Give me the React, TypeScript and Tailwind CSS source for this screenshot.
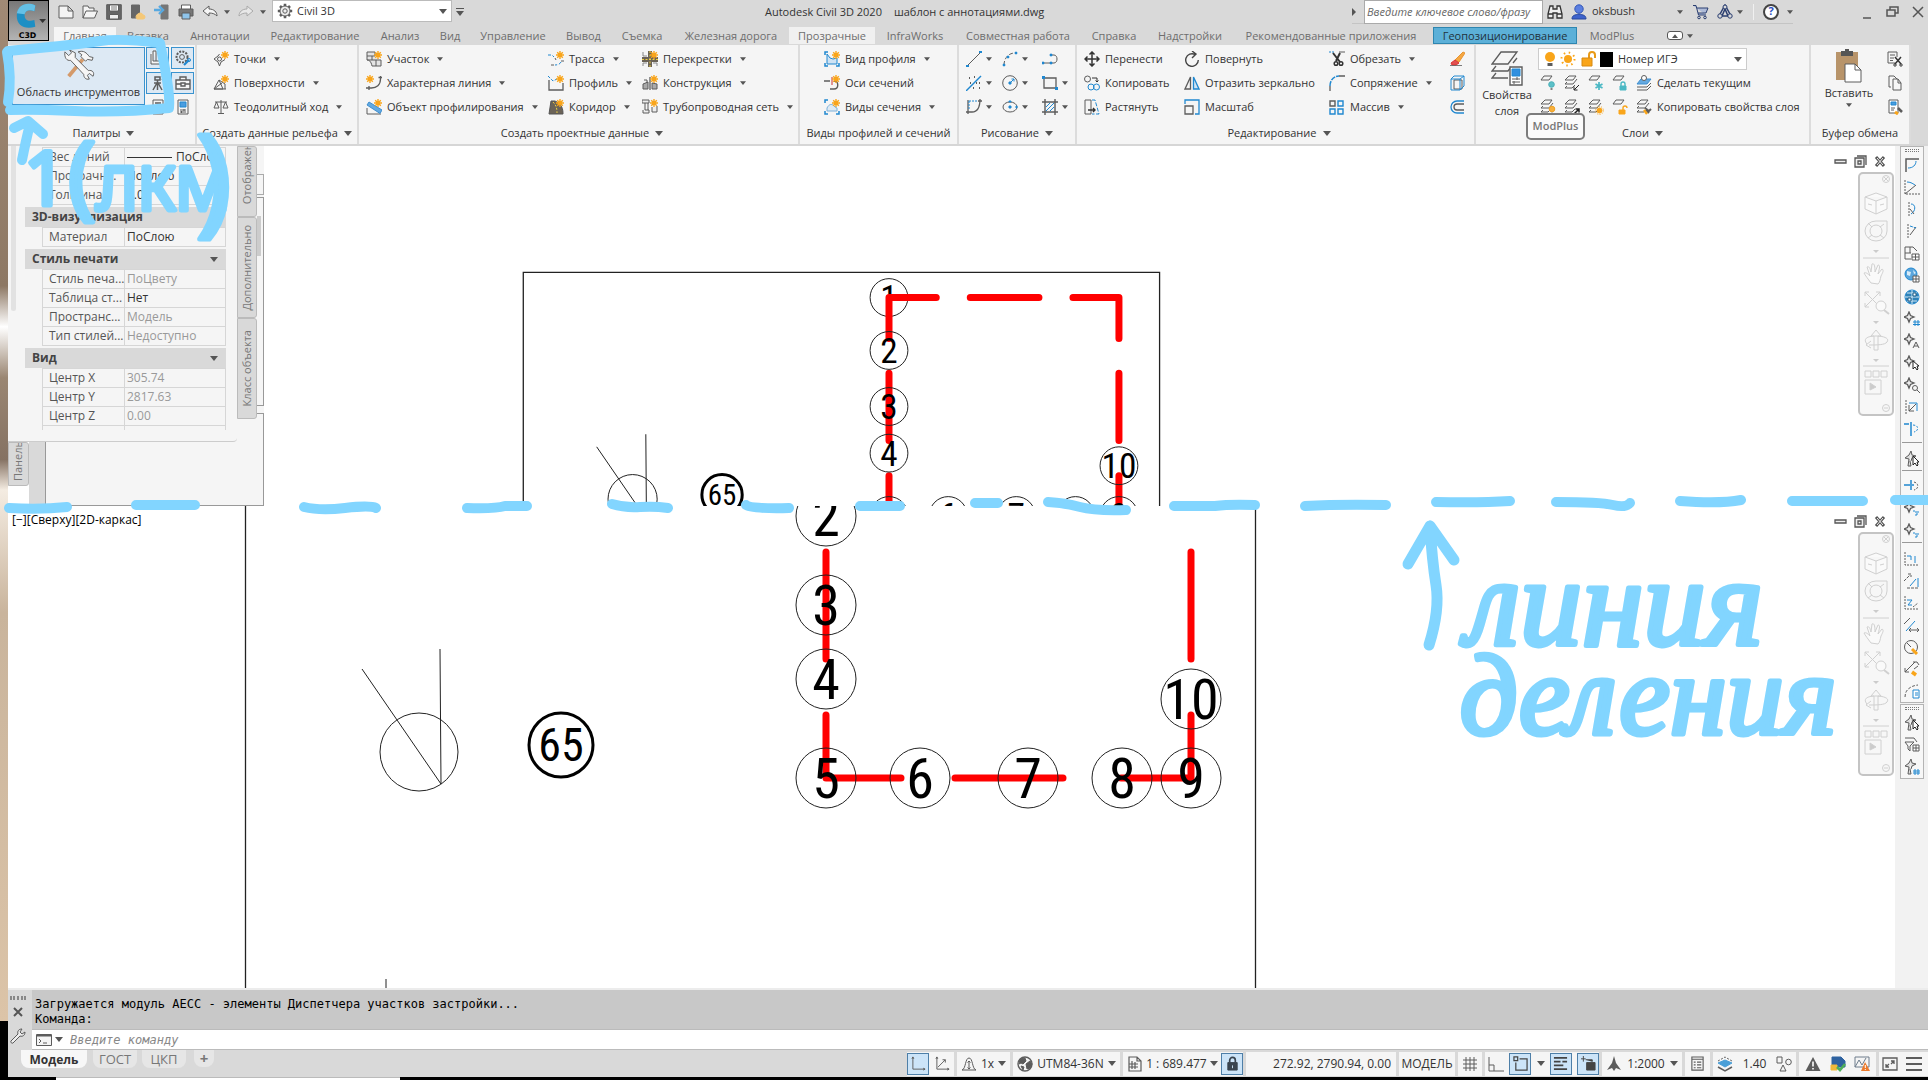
import type { ReactNode } from 'react';

const G = '#5c5c5c';
const B = '#2088d0';
const O = '#f9a51a';

const star = (
  <g stroke={O} strokeWidth="1.4">
    <path d="M12 0v8M8 4h8M9.2 1.2l5.6 5.6M14.8 1.2L9.2 6.8" />
    <circle cx="12" cy="4" r="2" fill={O} stroke="none" />
  </g>
);
const target = <path d="M5 1l1.500 3.500L10 6 6.500 7.500 5 11 3.500 7.500 0 6l3.500-1.500z" fill="#eee" strokeWidth="1.300" />;
const sheets = (
  <>
    <path d="M5 1h7l-3 4H1z" />
    <path d="M3 7L1 9h8l4-5M3 11l-2 2h7l3-3" />
  </>
);

const icons: Record<string, ReactNode> = {
  newFile: <path d="M1 2h9l5 5v7H1zM10 2v5h5" fill="#f4f4f4" />,
  open: <path d="M1 14V2h5l1 2h5v3M1 14l3-7h11.500l-3 7z" fill="#f4f4f4" />,
  save: (
    <>
      <path d="M.7.700h14.600v14.600H.7z" fill="#666" />
      <path d="M3.500 1h9v6h-9z" fill="#fff" />
      <path d="M3.500 10.500h9V15h-9z" fill="#eee" />
      <path d="M5 3h6M5 5h6" strokeWidth=".8" />
    </>
  ),
  openWeb: (
    <>
      <path d="M1.500 1h8v13h-8z" fill="#666" stroke="#666" />
      <path d="M7 15a3 3 0 0 1 1-5 3 3 0 0 1 5 1 2 2 0 0 1 0 4z" fill="#f5c877" stroke="#f5c877" />
    </>
  ),
  saveWeb: (
    <>
      <path d="M7 1h7v14H7z" fill="#777" stroke="#777" />
      <path d="M0 6h6M5 2l4 4-4 4" stroke="#58a9e0" strokeWidth="2.400" />
    </>
  ),
  print: (
    <>
      <path d="M3.500 5V1h9v4" fill="#fff" />
      <path d="M1 5h14v7H1z" fill="#777" />
      <path d="M4 9h8v6H4z" fill="#8fc4ea" />
    </>
  ),
  undo: <path d="M1 7l6-5v3c5 0 8 3 8 7-2-2-4-3-8-3v3z" fill="#f6f6f6" />,
  redo: <path d="M15 7L9 2v3c-5 0-8 3-8 7 2-2 4-3 8-3v3z" stroke="#aaa" fill="#e8e8e8" />,
  gear: (
    <>
      <path d="M8 .8v2.400M8 12.800v2.400M.8 8h2.400M12.800 8h2.400M3 3l1.600 1.600M11.400 11.400L13 13M13 3l-1.600 1.600M4.600 11.400L3 13" strokeWidth="2.600" />
      <circle cx="8" cy="8" r="5" fill="#eee" />
      <circle cx="8" cy="8" r="2.200" />
    </>
  ),
  binoculars: (
    <path
      d="M3 2h3v3h4V2h3l2 8v4h-5V9H6v5H1v-4zM1 10h5M10 10h5"
      fill="#eee"
      stroke="#333"
      strokeWidth="1.300"
    />
  ),
  user: (
    <>
      <circle cx="8" cy="5" r="4.200" fill="#5b7fe0" stroke="#3357b8" />
      <path d="M1 15c0-4 3-4 7-5 4 1 7 1 7 5z" fill="#3d62cc" stroke="#27479c" />
    </>
  ),
  cart: (
    <>
      <path d="M0 1.500h3L5.500 11H13M4 4h11l-2 5H5" stroke="#2a3e70" fill="#aebbd8" />
      <circle cx="6" cy="13.500" r="1.300" stroke="#2a3e70" />
      <circle cx="12" cy="13.500" r="1.300" stroke="#2a3e70" />
    </>
  ),
  appStore: (
    <g stroke="#2a3e70">
      <path d="M8 1L2 12h12zM8 5l-3 7h6z" strokeWidth="1.500" />
      <circle cx="8" cy="3" r="2" fill="#d9d9d9" />
      <circle cx="3" cy="12" r="2.200" fill="#d9d9d9" />
      <circle cx="13" cy="12" r="2.200" fill="#d9d9d9" />
    </g>
  ),
  book: <path d="M3 1v10h8v3H1V4M3 1h3v10M9 2l2-1 4 1v2" fill="#f6f6f6" />,
  survey: <path d="M5 2h5v3H5zM12 1l2 2-2 2M7.500 5v3M7.500 7L3 15M7.500 7L12 15M7.500 8v7M4 8h7" strokeWidth="1.500" />,
  gearWrench: (
    <>
      <circle cx="7" cy="7" r="5.500" strokeDasharray="2 1.200" strokeWidth="2" />
      <circle cx="7" cy="7" r="2.400" />
      <path d="M9 15l5-5" stroke={B} strokeWidth="2.200" />
      <circle cx="14" cy="10" r="1.500" stroke={B} />
    </>
  ),
  toolbox: <path d="M1 5h14v9H1zM5 5V2h6v3M1 9h5M10 9h5M6 8h4v3H6z" fill="#f6f6f6" strokeWidth="1.400" />,
  calculator: (
    <>
      <path d="M3 1h10v14H3z" />
      <path d="M5 4h6M5 8h2M9 8h2M5 11h2M9 11h2" strokeWidth="1.500" />
    </>
  ),
  props: (
    <>
      <path d="M3 1h10v14H3z" fill="#f6f6f6" />
      <path d="M5 3h6v5H5z" fill="#4a9de0" stroke={B} />
      <path d="M5 11h6M5 13h6M9 10v2M6.500 12v2" />
    </>
  ),
  points: (
    <>
      <path d="M6.500 3L5 5 1 8l4 3 1.500 4L8 11l4-2.500" fill="none" />
      <circle cx="6.500" cy="8" r="2" />
      {star}
    </>
  ),
  surface: (
    <>
      <path d="M1 14L6 5l4 9zM6 5l6 4v5M1 14h12M1 14l8-6" />
      {star}
    </>
  ),
  scales: <path d="M8 1v13M5 14.500h6M2 3h12M3.500 3L1 9h5zM12.500 3L10 9h5z" />,
  parcel: (
    <>
      <path d="M1 1h8v4H1zM1 5v4c2 0 4 1 5 6h9V9M6 5v4h9M10 9v6M1 9h5" fill="#e4e4e4" />
      {star}
    </>
  ),
  featureLine: (
    <>
      <path d="M14.500 1v3c0 6-4 9-9 9H0M12.500 2.500h4M3 11v4" strokeWidth="1.300" />
      <g transform="translate(-8 0)">{star}</g>
    </>
  ),
  grading: (
    <>
      <path d="M1 9v6h14" />
      <path d="M1 6l2-3 13 8-2 3.500z" fill="#64a9e0" stroke="#3e8fd0" />
      {star}
    </>
  ),
  alignment: (
    <>
      <path d="M0 4h3M4.500 4.500L6 6M13 11c-1 2-3 3-6 3" stroke={B} strokeDasharray="3 2" />
      <path d="M7 7l1 2M13 10h3M3 14h3" />
      {star}
    </>
  ),
  profile: (
    <>
      <path d="M1 5v10h14V8" strokeWidth="1.300" />
      <path d="M0 1l5 5 4-2" stroke={B} strokeDasharray="3 1.500" />
      {star}
    </>
  ),
  corridor: (
    <>
      <path d="M1 15L3 2h4c7 3 8 8 8 13z" fill="#6b6357" stroke="#555" />
      <path d="M5 3c3 3 4 6 4 11" stroke="#f0d040" strokeDasharray="2 1.500" />
      {star}
    </>
  ),
  intersection: (
    <>
      <path d="M6 0h4v16H6zM0 6h16v5H0z" fill="#6b6357" stroke="none" />
      <path d="M8 0v16M0 8.500h16" stroke="#f0d040" strokeDasharray="2 1.500" />
      <path d="M1 1v4h4M15 15v-3h-4M1 15v-3h4" stroke="#888" />
      {star}
    </>
  ),
  assembly: (
    <>
      <path d="M8 2v13" strokeWidth="1.300" />
      <path d="M1 9l5-2v7H1zM10 8l5 1v5h-5z" fill="#aaa" />
      <path d="M2 5h3v3" />
      {star}
    </>
  ),
  pipes: (
    <>
      <path d="M0 1h7v3H0zM3 4v7h4v3H1v-3M10 8v5h5V7M6 4v7" fill="#eee" />
      {star}
    </>
  ),
  profileView: (
    <>
      <path d="M4 1H1v3M12 15h3v-3M4 15H1v-3" stroke={B} strokeWidth="1.500" />
      <path d="M3 3v10h10V7L9 8 6 7z" stroke={B} fill="#cfe3f4" />
      {star}
    </>
  ),
  sampleLines: (
    <>
      <path d="M0 6h6M10 6c5 0 5 8 0 8H6" strokeWidth="1.400" />
      <path d="M8 2v8" stroke="#c33" />
      {star}
    </>
  ),
  sectionView: (
    <>
      <path d="M4 1H1v3M12 15h3v-3M4 15H1v-3" stroke={B} strokeWidth="1.500" />
      <path d="M3 12V9c2-4 5-5 8-1l2 1v3z" stroke="#7ab0da" fill="#dfeaf4" />
      {star}
    </>
  ),
  line: (
    <>
      <path d="M2 14L14 2" />
      <path d="M0 14h3v2H0zM13 0h3v2h-3z" fill={B} stroke="none" />
    </>
  ),
  arc: (
    <>
      <path d="M2 14C2 8 6 2 13 2" strokeDasharray="4 2" />
      <path d="M1 13h2v2H1zM5 5h2v2H5zM13 1h2v2h-2z" fill={B} stroke={B} strokeWidth=".5" />
    </>
  ),
  polyline: (
    <>
      <path d="M1 12h7M9 4h3c4 0 4 8 0 8h-2" />
      <path d="M0 11h2v2H0zM8 11h2v2H8zM8 3h2v2H8z" fill={B} stroke={B} strokeWidth=".6" />
    </>
  ),
  points2: (
    <>
      <path d="M0 16L15 1" stroke={B} strokeWidth="1.400" />
      <path d="M3 3h1M8 2h1M4 8h1M7 13h1M10 8h1M13 13h1M13 8h1" strokeWidth="2" />
    </>
  ),
  circle: (
    <>
      <circle cx="8" cy="8" r="7.300" />
      <path d="M8 8l4-4M9.500 4H12v2.500" stroke={B} />
      <path d="M7 7h2v2H7z" fill={B} stroke={B} />
    </>
  ),
  rectangle: (
    <>
      <path d="M2 3h12v10H2z" strokeWidth="1.300" />
      <path d="M0 1h3v3H0zM13 12h3v3h-3z" fill={B} stroke="none" />
    </>
  ),
  curve: (
    <>
      <path d="M2 1v14M0 13h6c6 0 8-5 8-13M12 2h4" strokeWidth="1.300" />
      <path d="M3 2h8M3 2v9" stroke={B} strokeDasharray="2 1" />
    </>
  ),
  ellipse: (
    <>
      <ellipse cx="8" cy="8" rx="7" ry="5" />
      <path d="M7 7h2v2H7zM14 7h1v2h-1zM7 2h2v1H7z" fill={B} stroke={B} />
    </>
  ),
  hatch: (
    <>
      <path d="M3 0v16M13 0v16M0 3h16M0 13h16" strokeWidth="1.400" />
      <path d="M4 8l4-4M4 12l8-8M8 12l4-4" stroke={B} />
    </>
  ),
  move: <path d="M8 1v14M1 8h14M5.500 3.500L8 1l2.500 2.500M5.500 12.500L8 15l2.500-2.500M3.500 5.500L1 8l2.500 2.500M12.500 5.500L15 8l-2.500 2.500" stroke="#333" strokeWidth="1.500" />,
  copy: (
    <>
      <circle cx="3.500" cy="4" r="3" />
      <path d="M8 3h5v4M11.500 5.500L13 7l1.500-1.500" stroke="#333" />
      <circle cx="7" cy="12" r="3" stroke={B} />
      <circle cx="12.500" cy="12" r="3" stroke={B} />
    </>
  ),
  stretch: (
    <>
      <path d="M1 1h6v14H1z" />
      <path d="M8 1h3l4 14H8" stroke={B} strokeDasharray="4 1.500" />
      <path d="M4 11h7M9 9l2 2-2 2" stroke="#333" strokeWidth="1.400" />
    </>
  ),
  rotate: <path d="M11 3.500A6.300 6.300 0 1 0 14.300 9M8 0l4 3-4 4" stroke="#444" strokeWidth="1.400" />,
  mirror: (
    <>
      <path d="M6.500 2v12H1z" strokeWidth="1.300" />
      <path d="M9.500 2v12H15z" stroke={B} strokeWidth="1.300" fill="#cfe3f4" />
    </>
  ),
  scale: (
    <>
      <path d="M1 5V1h14v14h-4" stroke={B} strokeWidth="1.300" />
      <path d="M1 15V7h8v8z" strokeWidth="1.300" />
    </>
  ),
  trim: (
    <>
      <path d="M0 1h5" stroke={B} strokeDasharray="2 1" />
      <path d="M10 1h6" />
      <path d="M4 2l7 9M11 2L7 10" stroke="#333" strokeWidth="2" />
      <circle cx="7" cy="12.500" r="1.800" stroke="#333" strokeWidth="1.500" />
      <circle cx="12" cy="12.500" r="1.800" stroke="#333" strokeWidth="1.500" />
    </>
  ),
  fillet: (
    <>
      <path d="M1 16v-5M10 1h6" strokeWidth="1.300" />
      <path d="M1 11C1 5 5 1 10 1" stroke={B} strokeWidth="1.500" strokeDasharray="5 1" />
    </>
  ),
  array: (
    <>
      <path d="M1 2h5v5H1z" strokeWidth="1.400" />
      <path d="M9 2h5v5H9zM1 10h5v5H1zM9 10h5v5H9z" stroke={B} strokeWidth="1.400" />
    </>
  ),
  erase: (
    <>
      <path d="M6 9l8-8 2 1-6 9z" fill="#f5a742" stroke="#e79430" />
      <path d="M2 12l4-3 4 3-3 2H3z" fill="#e05050" stroke="#d33" />
      <path d="M1 14.500h12" strokeWidth=".8" />
    </>
  ),
  explode: (
    <>
      <path d="M5 5h8v9H5z" stroke={G} />
      <path d="M2 4h9v11H2zM2 4l3-3h10v10l-4 4M11 4l4-3" stroke={B} />
    </>
  ),
  offset: (
    <>
      <path d="M15 2H8a6 6 0 0 0 0 12h7" stroke={B} strokeWidth="1.300" />
      <path d="M15 5H8a3 3 0 0 0 0 6h7" strokeWidth="1.300" />
    </>
  ),
  layOff: (
    <>
      <path d="M4 1h8L9 5H1z" />
      <circle cx="11.500" cy="9.500" r="2.800" fill="#5cc0c8" stroke="#4ab0b8" />
      <path d="M10.500 14h2" strokeWidth="1.500" />
    </>
  ),
  layIso: (
    <>
      {sheets}
      <path d="M15 10l-5 5M10 11.500V15h3.500" stroke="#222" />
    </>
  ),
  layFreeze: (
    <>
      <path d="M4 1h8L9 5H1z" />
      <path d="M11 7v8M7.500 9l7 4M7.500 13l7-4" stroke="#4ab8c4" strokeWidth="1.700" />
    </>
  ),
  layLock: (
    <>
      <path d="M4 1h8L9 5H1z" />
      <path d="M9 11v-2a2 2 0 0 1 4 0v2" stroke="#4ab8c4" strokeWidth="1.400" />
      <path d="M8 11h6v4H8z" fill="#4ab8c4" stroke="#4ab8c4" />
    </>
  ),
  layCurrent: (
    <>
      <path d="M1 9l4-5h10l-4 5z" fill="#64a9e0" stroke="#3e8fd0" />
      <circle cx="8" cy="3" r="2.500" fill="#fff" />
      <path d="M1 12h10l4-4M1 15h10l4-4" />
    </>
  ),
  layOn: (
    <>
      {sheets}
      <circle cx="12" cy="10" r="2.800" fill="#f7b03c" stroke="#f0a020" />
      <path d="M11 14.500h2" strokeWidth="1.500" />
    </>
  ),
  layUniso: (
    <>
      {sheets}
      <path d="M10 15l5-5M11.500 10H15v3.500" stroke="#222" strokeWidth="1.500" />
    </>
  ),
  layThaw: (
    <>
      {sheets}
      <circle cx="11.500" cy="11.500" r="2.500" fill={O} stroke={O} />
      <circle cx="11.500" cy="11.500" r="4" stroke={O} strokeDasharray="1 1.500" />
    </>
  ),
  layUnlock: (
    <>
      <path d="M4 1h8L9 5H1z" />
      <path d="M11 11V9a2 2 0 0 1 4 0" stroke={O} strokeWidth="1.400" />
      <path d="M7 11h6v4H7z" fill={O} stroke={O} />
    </>
  ),
  layMatch: (
    <>
      {sheets}
      <path d="M9 9l4 3 2-2M10 11l3 3" stroke={G} strokeWidth="2" />
      <path d="M8 11l3 4" stroke={O} strokeWidth="2.400" />
    </>
  ),
  cut: (
    <>
      <path d="M8 12H1V1h9v5M3 4h5M3 7h4M3 9.500h3" />
      <path d="M8 6l6 7M14 6l-6 7" stroke="#333" strokeWidth="1.500" />
      <circle cx="8" cy="14" r="1.200" stroke="#333" />
      <circle cx="14" cy="14" r="1.200" stroke="#333" />
    </>
  ),
  copyClip: <path d="M4 12H2V1h5l3 3M6 4h5l3 4v7H6zM11 4v4h3" fill="#f6f6f6" />,
  matchProps: (
    <>
      <path d="M2 1h9v13H2z" fill="#fff" />
      <path d="M4 3h5v3H4z" fill="#4a9de0" stroke={B} />
      <path d="M4 9h4M4 11h3" />
      <path d="M8 13l3 2" stroke={O} strokeWidth="3" />
      <path d="M11 9l4 4" strokeWidth="2.500" />
    </>
  ),
  // transparent-command toolbar
  t1: (
    <>
      <path d="M2 15V2h13" strokeWidth="1.500" />
      <path d="M4 11c5 0 8-3 8-7" stroke={B} />
    </>
  ),
  t2: (
    <>
      <path d="M1 1v14h15" strokeDasharray="2 1" />
      <path d="M1 15L12 6" />
      <path d="M3 3c3 0 5 1 8 3" stroke={B} />
    </>
  ),
  t3: (
    <>
      <path d="M5 1v14" strokeDasharray="2 1" />
      <path d="M7 3c5 0 5 7 0 10" stroke={B} />
      <path d="M6 8l4 5" />
    </>
  ),
  t4: (
    <>
      <path d="M4 1v14" strokeDasharray="2 1" />
      <path d="M6 12l6-8" />
      <path d="M6 3l6 2" stroke={B} strokeDasharray="3 1" />
    </>
  ),
  t5: (
    <>
      <path d="M1 2h8l4 4M1 2v12h6M1 8h6M6 2v6" />
      <path d="M8 9h7v6H8zM8 12h7M11.500 9v6" fill="#fff" />
    </>
  ),
  t6: (
    <>
      <circle cx="7" cy="7" r="6" fill="#5aa5dc" stroke={B} />
      <path d="M3 4l4 1-1 4-3-1zM9 3l3 3-2 1z" fill="#d8ecf8" stroke="none" />
      <path d="M9 9h6v6H9zM9 12h6M12 9v6" fill="#fff" />
    </>
  ),
  t7: (
    <>
      <circle cx="8" cy="8" r="7" fill="#2f82b8" stroke={B} />
      <path d="M1 8h14M8 1v14M3 4h10M3 12h10" stroke="#cfe6f5" />
      <path d="M4 9h3v3H4zM9 4h3v3H9z" fill="#fff" stroke="#1a5a86" />
    </>
  ),
  tNum: (
    <>
      {target}
      <path d="M11 9v6M14 9v6M9 11h7M9 13.500h7" stroke={B} />
    </>
  ),
  tName: (
    <>
      {target}
      <path d="M9 15l3-6 3 6M10 13h4" />
    </>
  ),
  tPick: (
    <>
      {target}
      <path d="M9 6v8l2-2 2 3 1-1-1-3h2z" fill="#fff" stroke="#222" />
    </>
  ),
  tZoom: (
    <>
      {target}
      <circle cx="11" cy="11" r="2.500" />
      <path d="M13 13l3 3" />
    </>
  ),
  t8: (
    <>
      <path d="M2 1v14" strokeDasharray="2 1" />
      <path d="M5 4h8v8" stroke={B} />
      <path d="M5 6v6h5M5 12l7-7" />
    </>
  ),
  t9: (
    <>
      <path d="M0 3h5M7 1v14" stroke={B} strokeWidth="1.500" />
      <path d="M9 4c6 0 6 6 1 7" stroke={B} strokeDasharray="2 1.500" />
    </>
  ),
  t10: (
    <>
      <path d="M7 1v4M7 7v4M0 6h4M4 6h6" stroke={B} strokeWidth="1.500" />
      <path d="M10 3c5 1 5 7 0 8" strokeDasharray="2 1.500" />
    </>
  ),
  t11: (
    <>
      {target}
      <path d="M9 10h3v5M14 10v3h-2" stroke={B} strokeDasharray="2 1" />
    </>
  ),
  t12: (
    <>
      <path d="M1 1v13h14" strokeDasharray="2 1" />
      <path d="M3 5h4v4M11 5v7" stroke={B} />
    </>
  ),
  t13: (
    <>
      <path d="M0 8l6-6M4 1h3v3M3 15h12" strokeDasharray="3 1" />
      <path d="M6 13l6-7M14 5v9" stroke={B} />
    </>
  ),
  t14: (
    <>
      <path d="M1 1v13h14M9 12l5-4" strokeDasharray="2 1" />
      <path d="M3 5h5l-4 5h4" stroke={B} />
    </>
  ),
  t15: (
    <>
      <path d="M0 7l6-6M5 13h10M7 11l-2 2 2 2M13 11l2 2-2 2" />
      <path d="M2 14L11 4" stroke={B} />
    </>
  ),
  t16: (
    <>
      <circle cx="7" cy="8" r="6.500" />
      <path d="M3 4l4 4" />
      <path d="M8 10l5 5" stroke={O} strokeWidth="3" />
    </>
  ),
  t17: (
    <>
      <path d="M1 11L11 1M1 7v4h4M9 1h4l2 3M10 8l4-3" />
      <path d="M8 11l4 3" stroke={O} strokeWidth="3.500" />
    </>
  ),
  t18: (
    <>
      <path d="M1 14C1 8 5 3 14 2" strokeDasharray="3 1.500" />
      <path d="M9 7h6v8H9zM11 10h3M11 12h3" stroke={B} fill="#fff" />
    </>
  ),
  tPick2: (
    <>
      <path d="M7 0l1 4 4 1-4 2-1 3M7 0L5 4 1 7l4 1-1 7h3l-1-5" fill="#ddd" />
      <path d="M9 5v9l2-2 2 3 1-1-1-3h2z" fill="#fff" stroke="#222" />
    </>
  ),
  tSheet2: (
    <>
      <path d="M1 1h9l3 4M1 5h9l-4 4v5l-2-2V9z" />
      <path d="M9 8h6v6H9zM9 11h6M12 8v6" fill="#fff" />
    </>
  ),
  tNum2: (
    <>
      <path d="M7 0l1 4 4 1-4 2-1 3M7 0L5 4 1 7l4 1-1 7h3l-1-5" fill="#ddd" />
      <path d="M11 10v6M14 10v6M9 12h7M9 14h7" stroke={B} />
    </>
  ),
  // status bar
  ucs: <path d="M2 1v13h13M1 3l1-2 1 2M13 13l2 1-2 1" />,
  ucs2: <path d="M2 1v13h13M1 3l1-2 1 2M13 13l2 1-2 1M3 12l8-8M8 4h3v3" />,
  exag: <path d="M1 14C5 13 4 2 8 2s3 11 7 12zM8 5v8M6.500 6.500L8 5l1.500 1.500M6.500 11.500L8 13l1.500-1.500" />,
  globe: (
    <>
      <circle cx="8" cy="8" r="7" strokeWidth="1.400" />
      <path d="M3 3l5-1 1 3-3 3-2-1-2 1zM9 8l4-3 2 3-2 4-3 1zM4 10l3 1-1 3z" fill={G} />
    </>
  ),
  scaleSheet: <path d="M2 1h8l4 4v10H2zM10 1v4h4M2 8h9M2 11h9M5 5v8M8 6v7" strokeWidth="1.200" />,
  lock: (
    <>
      <path d="M5 7V4.500a3 3 0 0 1 6 0V7" stroke="#3a4550" strokeWidth="1.800" />
      <path d="M3 7h10v8H3z" fill="#3a4550" stroke="#3a4550" />
      <path d="M8 10v3" stroke="#cce4f8" />
    </>
  ),
  grid: <path d="M4 1v14M8 1v14M12 1v14M1 4h14M1 8h14M1 12h14" />,
  ortho: <path d="M1 1v14h15M1 9h5v6" />,
  osnap: <path d="M1 1h4v4H1zM7 3h8v12H3V7" strokeWidth="1.300" stroke="#444" />,
  weight: <path d="M1 2h14M1 6h7M10 6h5M1 10h10M1 14h14" strokeWidth="2" stroke="#444" />,
  cycle: (
    <>
      <path d="M0 3h5M2.500 0v6" stroke="#444" />
      <path d="M5 4h7v2M6 7h9v8H6z" fill="#444" stroke="#444" />
    </>
  ),
  annot: <path d="M8 0l2 7 5 7-5-2-2 3-2-3-5 2 5-7z" fill={G} stroke="none" />,
  list: <path d="M2 1h12v14H2zM2 3.500h12M4 6.500h2M7.500 6.500H12M4 9.500h2M7.500 9.500H12M4 12.500h2M7.500 12.500H12" strokeWidth="1.200" />,
  stack: (
    <>
      <path d="M1 5l7-4 7 4" strokeDasharray="2 1.500" />
      <path d="M1 7l7-3 7 3-7 4z" fill="#4a9fd8" stroke="#4a9fd8" />
      <path d="M1 11l7 4 7-4" strokeWidth="1.500" />
    </>
  ),
  shapes: (
    <>
      <path d="M1 1h5v6H1zM7 9l3 6H4z" />
      <circle cx="12.500" cy="6" r="2.800" />
    </>
  ),
  warn: (
    <>
      <path d="M8 1l7.500 14H.5z" fill={G} stroke="none" />
      <path d="M8 5.500v5M8 12v1.600" stroke="#fff" strokeWidth="1.600" />
    </>
  ),
  dbCheck: (
    <>
      <path d="M2 1h9l4 4v6H2z" fill="#2f62a0" stroke="#2f62a0" />
      <path d="M1 9h6v5H1z" fill="#f0b93a" stroke="#f0b93a" />
      <path d="M7 11l3 3 5-6" stroke="#4fae5a" strokeWidth="2.600" />
    </>
  ),
  graph: (
    <>
      <path d="M1 1h14v10H1zM1 11l4-7 3 5 4-7" stroke="#6e7d8c" />
      <path d="M11 6l5 9H7z" fill="#ec7a2c" stroke="none" />
      <path d="M11.300 9v3M11.300 13v1" stroke="#fff" />
    </>
  ),
  expand: <path d="M1 2h14v12H1zM9 5h3v3M12 5L9 8M4 8v3h3M4 11l3-3" strokeWidth="1.300" />,
  burger: <path d="M0 2h16M0 8h16M0 14h16" strokeWidth="2" />,
};

function Icon({ name, className = 'size-4' }: { name: string; className?: string }) {
  return (
    <svg viewBox="0 0 16 16" className={`shrink-0 ${className}`} fill="none" stroke={G} aria-hidden="true">
      {icons[name]}
    </svg>
  );
}

function Caret({ big = false }: { big?: boolean }) {
  return (
    <svg viewBox="0 0 8 5" className={`shrink-0 ${big ? 'h-[5px] w-2' : 'h-1 w-[6px]'}`} aria-hidden="true">
      <path d="M0 0h8L4 5z" fill="#555" />
    </svg>
  );
}

function Tool({ icon, label, menu }: { icon: string; label: string; menu?: boolean }) {
  return (
    <button className="flex h-6 items-center gap-[5px] whitespace-nowrap hover:bg-[#dde9f4]">
      <Icon name={icon} />
      <span>{label}</span>
      {menu && (
        <span className="pl-[3px]">
          <Caret />
        </span>
      )}
    </button>
  );
}

function Panel({ title, menu, className, children }: { title: string; menu?: boolean; className: string; children: ReactNode }) {
  return (
    <section className={`flex shrink-0 flex-col border-r-2 border-[#dcdcdc] bg-[#f5f5f5] pt-[2px] ${className}`}>
      <div className="flex h-[76px]">{children}</div>
      <button className="flex h-5 items-center justify-center gap-[6px] whitespace-nowrap">
        {title}
        {menu && <Caret big />}
      </button>
    </section>
  );
}

const tabs = [
  { label: 'Главная', cls: 'w-[62px] bg-[#f5f5f5]' },
  { label: 'Вставка', cls: 'w-[64px]' },
  { label: 'Аннотации', cls: 'w-[80px]' },
  { label: 'Редактирование', cls: 'w-[110px]' },
  { label: 'Анализ', cls: 'w-[60px]' },
  { label: 'Вид', cls: 'w-[40px]' },
  { label: 'Управление', cls: 'w-[86px]' },
  { label: 'Вывод', cls: 'w-[55px]' },
  { label: 'Съемка', cls: 'w-[62px]' },
  { label: 'Железная дорога', cls: 'w-[116px]' },
  { label: 'Прозрачные', cls: 'w-[86px] bg-[#f0f0f0]' },
  { label: 'InfraWorks', cls: 'w-[80px]' },
  { label: 'Совместная работа', cls: 'w-[126px]' },
  { label: 'Справка', cls: 'w-[66px]' },
  { label: 'Надстройки', cls: 'w-[86px]' },
  { label: 'Рекомендованные приложения', cls: 'w-[196px]' },
  { label: 'Геопозиционирование', cls: 'ml-1 w-[144px] border border-[#2e86b0] bg-[#5cb0d8] text-[#22323c]' },
  { label: 'ModPlus', cls: 'w-[70px]' },
];

function TitleBar() {
  return (
    <header className="flex h-[45px] bg-[#d9d9d9] text-[11px]">
      <button className="flex h-[41px] w-[41px] shrink-0 flex-col items-center border border-black bg-linear-to-b from-[#777] to-[#b4b4b4]">
        <svg viewBox="0 0 40 39" className="h-full w-full" aria-label="Civil 3D">
          <path d="M27 4C17 0 8 5 8 15s8 14 19 11l-1-7c-6 2-10 0-10-5s5-6 10-4z" fill="#1d8fc4" />
          <path d="M27 4C17 0 10 4 8 12l8 1c1-4 5-5 10-3z" fill="#64c0e6" />
          <path d="M31 18h7l-3.500 4z" fill="#333" />
          <text x="19" y="37" textAnchor="middle" fontSize="8" fontWeight="700" className="font-['DejaVu_Sans']">
            C3D
          </text>
        </svg>
      </button>
      <div className="min-w-0 flex-1">
        <div className="flex h-[27px] items-start">
          <div className="flex h-[23px] items-center pl-[9px]">
            <div className="flex gap-2">
              {['newFile', 'open', 'save', 'openWeb', 'saveWeb', 'print', 'undo'].map((n) => (
                <button key={n} aria-label={n}>
                  <Icon name={n} />
                </button>
              ))}
            </div>
            <div className="flex w-9 items-center justify-between pl-[6px]">
              <Caret />
              <Icon name="redo" />
            </div>
            <div className="flex w-[18px] justify-center">
              <Caret />
            </div>
          </div>
          <label className="relative flex h-[22px] w-[180px] items-center gap-1 border border-[#bbb] bg-white px-1">
            <Icon name="gear" />
            <select aria-label="Рабочее пространство" className="flex-1 appearance-none bg-transparent outline-none">
              <option>Civil 3D</option>
            </select>
            <Caret big />
          </label>
          <button aria-label="Настройка" className="flex h-[23px] w-4 flex-col items-center justify-center gap-[2px]">
            <span className="h-px w-2 bg-[#555]" />
            <Caret big />
          </button>
          <h1 className="ml-[297px] flex h-6 items-center gap-[12px] whitespace-nowrap">
            <span>Autodesk Civil 3D 2020</span>
            <span>шаблон с аннотациями.dwg</span>
          </h1>
          <div className="ml-auto flex h-6 items-center border-b border-[#c4c4c4]">
            <svg viewBox="0 0 4 8" className="mr-2 h-2 w-1" aria-hidden="true">
              <path d="M0 0v8l4-4z" fill="#555" />
            </svg>
            <input
              aria-label="Поиск"
              placeholder="Введите ключевое слово/фразу"
              className="h-6 w-[179px] border border-[#aaa] bg-white px-[2px] italic outline-none placeholder:text-[#666]"
            />
            <button aria-label="Найти" className="ml-1">
              <Icon name="binoculars" />
            </button>
            <button className="ml-2 flex w-[112px] items-center gap-[5px]">
              <Icon name="user" />
              <span>oksbush</span>
              <span className="ml-auto">
                <Caret />
              </span>
            </button>
            <button aria-label="Корзина" className="ml-[10px]">
              <Icon name="cart" />
            </button>
            <button aria-label="Приложения" className="ml-2 flex items-center gap-1">
              <Icon name="appStore" />
              <Caret />
            </button>
            <button aria-label="Помощь" className="ml-[10px] flex items-center gap-2 border-l border-[#f0f0f0] pl-[9px]">
              <span className="flex size-4 items-center justify-center rounded-full border-2 border-[#444] bg-white font-bold text-[#2a4ec0]">?</span>
              <Caret />
            </button>
          </div>
          <div className="ml-[66px] flex h-6 items-center pr-[3px]">
            <svg viewBox="0 0 66 16" className="h-4 w-[66px]" fill="none" stroke="#555" strokeWidth="1.500" aria-label="Окно">
              <path d="M4 14h8M28 6h8v6h-8zM31 6V3h8v6h-3M54 3l10 10M64 3L54 13" />
            </svg>
          </div>
        </div>
        <nav className="flex h-[17px] items-center pl-[5px] text-[#6e6e6e]">
          {tabs.map((t) => (
            <button key={t.label} className={`h-[17px] shrink-0 text-center leading-[15px] whitespace-nowrap ${t.cls}`}>
              {t.label}
            </button>
          ))}
          <button aria-label="Свернуть ленту" className="ml-5 flex items-center gap-1">
            <span className="flex h-[9px] w-4 items-center justify-center rounded-[3px] border border-[#555] bg-white">
              <span className="rotate-180">
                <Caret />
              </span>
            </span>
            <Caret />
          </button>
        </nav>
      </div>
    </header>
  );
}

function SmallToggle({ icon, on }: { icon: string; on?: boolean }) {
  return (
    <button
      aria-label={icon}
      className={`flex h-[22px] w-[23px] items-center justify-center border ${on ? 'border-[#3a93cf] bg-[#dde9f4]' : 'border-transparent'}`}
    >
      <Icon name={icon} />
    </button>
  );
}

function Ribbon() {
  return (
    <div className="relative flex h-[101px] border-b-2 border-[#d6d6d6] bg-[#d9d9d9] text-[11px]">
      <Panel title="Палитры" menu className="w-[189px] pl-1">
        <button className="flex h-[58px] w-[133px] shrink-0 flex-col items-center border border-[#3a93cf] bg-[#dde9f4] pt-[2px]">
          <svg viewBox="0 0 32 32" className="size-8" fill="none" aria-hidden="true">
            <path d="M5 28L20 10" stroke="#d49a6a" strokeWidth="4" />
            <path d="M15 2c6-2 9 1 12 5l4 1-1 3-5-1-2 2-5-5 1-2z" fill="#f6f6f6" stroke={G} />
            <path d="M1 2l4 4 3-3-2-3 6 3v5l14 14c4-1 7 2 5 6l-4-3-2 2 2 4c-4 1-6-2-6-5L7 11c-4 1-7-3-6-9z" fill="#f6f6f6" stroke={G} />
          </svg>
          <span className="leading-6 whitespace-nowrap">Область инструментов</span>
        </button>
        <div className="ml-px grid h-[72px] shrink-0 grid-cols-2 gap-x-[2px] gap-y-[2px]">
          <SmallToggle icon="book" on />
          <SmallToggle icon="gearWrench" on />
          <SmallToggle icon="survey" on />
          <SmallToggle icon="toolbox" on />
          <SmallToggle icon="calculator" />
          <SmallToggle icon="props" />
        </div>
      </Panel>
      <Panel title="Создать данные рельефа" menu className="w-[162px]">
        <div className="pl-4">
          <Tool icon="points" label="Точки" menu />
          <Tool icon="surface" label="Поверхности" menu />
          <Tool icon="scales" label="Теодолитный ход" menu />
        </div>
      </Panel>
      <Panel title="Создать проектные данные" menu className="w-[441px] pl-[7px]">
        <div className="w-[182px] shrink-0">
          <Tool icon="parcel" label="Участок" menu />
          <Tool icon="featureLine" label="Характерная линия" menu />
          <Tool icon="grading" label="Объект профилирования" menu />
        </div>
        <div className="w-[94px] shrink-0">
          <Tool icon="alignment" label="Трасса" menu />
          <Tool icon="profile" label="Профиль" menu />
          <Tool icon="corridor" label="Коридор" menu />
        </div>
        <div>
          <Tool icon="intersection" label="Перекрестки" menu />
          <Tool icon="assembly" label="Конструкция" menu />
          <Tool icon="pipes" label="Трубопроводная сеть" menu />
        </div>
      </Panel>
      <Panel title="Виды профилей и сечений" className="w-[159px]">
        <div className="pl-6">
          <Tool icon="profileView" label="Вид профиля" menu />
          <Tool icon="sampleLines" label="Оси сечений" />
          <Tool icon="sectionView" label="Виды сечения" menu />
        </div>
      </Panel>
      <Panel title="Рисование" menu className="w-[118px]">
        <div className="grid grid-cols-[36px_40px_28px] content-start pl-[7px]">
          {['line', 'arc', 'polyline', 'points2', 'circle', 'rectangle', 'curve', 'ellipse', 'hatch'].map((n) => (
            <button key={n} aria-label={n} className="flex h-6 items-center gap-1">
              <Icon name={n} />
              {n !== 'polyline' && <Caret />}
            </button>
          ))}
        </div>
      </Panel>
      <Panel title="Редактирование" menu className="w-[399px] pl-[7px]">
        <div className="w-[100px] shrink-0">
          <Tool icon="move" label="Перенести" />
          <Tool icon="copy" label="Копировать" />
          <Tool icon="stretch" label="Растянуть" />
        </div>
        <div className="w-[145px] shrink-0">
          <Tool icon="rotate" label="Повернуть" />
          <Tool icon="mirror" label="Отразить зеркально" />
          <Tool icon="scale" label="Масштаб" />
        </div>
        <div className="w-[120px] shrink-0">
          <Tool icon="trim" label="Обрезать" menu />
          <Tool icon="fillet" label="Сопряжение" menu />
          <Tool icon="array" label="Массив" menu />
        </div>
        <div>
          {['erase', 'explode', 'offset'].map((n) => (
            <button key={n} aria-label={n} className="flex h-6 items-center">
              <Icon name={n} />
            </button>
          ))}
        </div>
      </Panel>
      <Panel title="Слои" menu className="w-[335px]">
        <button className="flex w-[62px] shrink-0 flex-col items-center pt-1 leading-4">
          <svg viewBox="0 0 32 36" className="h-9 w-8 shrink-0" fill="none" stroke={G} aria-hidden="true">
            <path d="M10 1h16L17 13H1zM5 15l-4 5h16l3-4M5 22l-4 5h16M26 7l-4 5" strokeWidth="1.300" />
            <path d="M19 16h12v18H19z" fill="#fff" strokeWidth="1.400" />
            <path d="M21 18h8v7h-8z" fill="#3090e0" stroke={B} />
            <path d="M21 28h8M21 31h8M26 26v3M23 30v3" />
          </svg>
          <span className="w-14">Свойства слоя</span>
        </button>
        <div>
          <div className="flex h-6 items-center">
            <label className="flex h-[22px] w-[209px] items-center gap-[5px] border border-[#ccc] bg-white px-1">
              <svg viewBox="0 0 70 16" className="h-4 w-[70px]" fill="none" aria-hidden="true">
                <circle cx="7" cy="6" r="5" fill={O} />
                <path d="M4.500 13.500h5" stroke={G} strokeWidth="3" />
                <circle cx="25" cy="8" r="4" fill={O} />
                <circle cx="25" cy="8" r="6.500" stroke={O} strokeWidth="2" strokeDasharray="1.500 3.600" />
                <path d="M46 7V4a3 3 0 0 1 6 0v3" stroke="#e89a18" strokeWidth="2" />
                <path d="M39 7h10v8H39z" fill={O} stroke="#d88a10" />
                <path d="M57 1h13v15H57z" fill="#000" />
              </svg>
              <select aria-label="Слой" className="flex-1 appearance-none bg-transparent outline-none">
                <option>Номер ИГЭ</option>
              </select>
              <Caret big />
            </label>
          </div>
          <div className="flex h-6 items-center gap-2 pl-[2px]">
            {['layOff', 'layIso', 'layFreeze', 'layLock'].map((n) => (
              <Icon key={n} name={n} />
            ))}
            <Tool icon="layCurrent" label="Сделать текущим" />
          </div>
          <div className="flex h-6 items-center gap-2 pl-[2px]">
            {['layOn', 'layUniso', 'layThaw', 'layUnlock'].map((n) => (
              <Icon key={n} name={n} />
            ))}
            <Tool icon="layMatch" label="Копировать свойства слоя" />
          </div>
        </div>
      </Panel>
      <Panel title="Буфер обмена" className="w-[100px] border-r-0">
        <button className="flex w-[76px] shrink-0 flex-col items-center pt-[2px]">
          <svg viewBox="0 0 28 34" className="h-[34px] w-7" fill="none" aria-hidden="true">
            <path d="M1 3h22v28H1z" fill="#b8946a" />
            <path d="M6 2h12v5H6zM10 0h4v3h-4z" fill="#555" />
            <path d="M10 15h10l6 6v12H10z" fill="#fff" stroke={G} />
            <path d="M20 15v6h6" stroke={G} />
          </svg>
          <span className="leading-5">Вставить</span>
          <Caret />
        </button>
        <div>
          {['cut', 'copyClip', 'matchProps'].map((n) => (
            <button key={n} aria-label={n} className="flex h-6 items-center">
              <Icon name={n} />
            </button>
          ))}
        </div>
      </Panel>
      <div role="tooltip" className="absolute top-[68px] left-[1518px] flex h-[27px] w-[59px] items-center justify-center rounded-[5px] border-2 border-[#7c7c7c] bg-[#fbfbfb] text-[11px] font-semibold text-[#777]">
        ModPlus
      </div>
    </div>
  );
}

type Row = { name: string; value: string; on?: boolean; line?: boolean };

function PropGroup({ title, rows }: { title?: string; rows: Row[] }) {
  return (
    <div className="mb-[2px]">
      {title && (
        <div className="flex h-5 items-center justify-between bg-[#d9d9d9] pr-[8px] pl-[7px] font-bold text-[#444]">
          {title}
          <Caret big />
        </div>
      )}
      <table className="ml-[17px] w-[184px] table-fixed border-collapse">
        <tbody>
          {rows.map((r) => (
            <tr key={r.name} className="h-[19px]">
              <th scope="row" className="w-[82px] border border-[#d6d6d6] pl-[6px] text-left leading-[18px] font-normal whitespace-nowrap text-[#555]">
                {r.name}
              </th>
              <td className={`border border-[#d6d6d6] pl-[2px] leading-[18px] whitespace-nowrap ${r.on ? 'text-[#333]' : 'text-[#999]'}`}>
                {r.line && <span className="mr-1 inline-block h-px w-[45px] bg-[#333] align-middle" />}
                {r.value}
              </td>
            </tr>
          ))}
        </tbody>
      </table>
    </div>
  );
}

function SideTab({ label, className }: { label: string; className: string }) {
  return (
    <button className={`flex w-5 justify-center overflow-hidden rounded-r-[3px] border border-[#bbb] bg-[#d9d9d9] text-[11px] text-[#777] ${className}`}>
      <span className="shrink-0 rotate-180 whitespace-nowrap [writing-mode:vertical-rl]">{label}</span>
    </button>
  );
}

function Palette() {
  return (
    <aside className="flex w-64 shrink-0 flex-col overflow-hidden bg-white">
      <div className="flex h-[296px] shrink-0 bg-[#f5f5f5]">
        <div className="flex w-[229px] overflow-hidden rounded-br border-b border-[#ccc] pl-[3px]">
          <div className="h-[165px] w-[5px] rounded-b bg-[#e2e2e2]" />
          <div className="ml-[9px] h-[284px] w-[201px] overflow-hidden pt-px">
            <PropGroup
              rows={[
                { name: 'Вес линий', value: 'ПоСлою', on: true, line: true },
                { name: 'Прозрачн...', value: 'ПоСлою', on: true },
                { name: 'Толщина', value: '0.00', on: true },
              ]}
            />
            <PropGroup title="3D-визуализация" rows={[{ name: 'Материал', value: 'ПоСлою', on: true }]} />
            <PropGroup
              title="Стиль печати"
              rows={[
                { name: 'Стиль печа...', value: 'ПоЦвету' },
                { name: 'Таблица ст...', value: 'Нет', on: true },
                { name: 'Пространс...', value: 'Модель' },
                { name: 'Тип стилей...', value: 'Недоступно' },
              ]}
            />
            <PropGroup
              title="Вид"
              rows={[
                { name: 'Центр X', value: '305.74' },
                { name: 'Центр Y', value: '2817.63' },
                { name: 'Центр Z', value: '0.00' },
                { name: ' ', value: ' ' },
              ]}
            />
          </div>
        </div>
        <div className="w-5">
          <SideTab label="Отображение" className="h-[71px] items-end pb-3" />
          <SideTab label="Дополнительно" className="h-[101px] items-center" />
          <SideTab label="Класс объекта" className="h-[101px] items-center" />
        </div>
        <div className="flex flex-1 flex-col">
          <div className="mt-[28px] h-[21px] border border-l-0 border-[#aaa]" />
          <div className="mt-[2px] h-[209px] border-y border-r border-[#999]">
            <div className="mt-[18px] h-10 w-1 bg-[#ccc]" />
          </div>
          <div className="mt-[7px] flex-1 border-t border-r border-[#999]" />
        </div>
      </div>
      <div className="flex flex-1">
        <div className="w-[21px] bg-white">
          <SideTab label="Панель" className="h-11 w-[21px] items-end pb-1" />
        </div>
        <div className="w-4 bg-[#d9d9d9]" />
        <div className="flex-1 border-x border-b border-[#999] bg-[#f5f5f5]" />
      </div>
    </aside>
  );
}

function NavBar() {
  return (
    <svg viewBox="0 0 37 244" className="h-[244px] w-[37px]" fill="none" stroke="#d0d0d0" aria-label="Панель навигации">
      <rect x="1" y="1" width="34" height="242" rx="4" fill="#f7f7f7" stroke="#c4c4c4" strokeWidth="2" />
      <circle cx="28" cy="7" r="3.500" />
      <path d="M26 5l4 4M30 5l-4 4" />
      <path d="M18 21l11 4v12l-11 5-11-5V25zM7 25l11 4 11-4M18 29v13M10 32l4 1M22 33l4-1" fill="#fafafa" />
      <path d="M18 49h11v10a11 10 0 1 1-11-10z" />
      <circle cx="18" cy="59" r="6" />
      <path d="M14 55l-4-4M22 55l4-3M14 63l-4 3M22 63l4 3" />
      <path d="M15 78h6l-3 3z" fill="#ccc" stroke="none" />
      <path d="M5 86h26" />
      <path d="M13 111c-3-4-6-8-7-10 2-1 4 1 6 3l-3-9c2-1 3 1 4 5l1-8c2-1 3 1 3 8l3-7c2 0 2 2 0 9l4-5c2 1 1 3-1 7-1 4-1 6-3 8z" fill="#fafafa" />
      <path d="M7 120l15 15M22 120L7 135M7 124v-4h4M18 120h4v4M7 131v4h4" />
      <circle cx="23" cy="134" r="5" fill="#fafafa" />
      <path d="M26 138l5 4" strokeWidth="2" />
      <path d="M15 149h6l-3 3z" fill="#ccc" stroke="none" />
      <path d="M16 178v-14h-3l5-6 5 6h-3v14zM9 172c-5-6 2-8 9-8s14 2 11 6c-2 3-10 3-18 3M13 169l-5 4 5 3" />
      <path d="M15 187h6l-3 3z" fill="#ccc" stroke="none" />
      <path d="M5 194h26" />
      <path d="M7 199h6v6H7zM15 199h6v6h-6zM23 199h6v6h-6zM7 208h16v14H7z" />
      <path d="M12 211v7l6-3z" fill="#ccc" />
      <circle cx="28" cy="236" r="3.500" />
      <path d="M26 236h4" />
    </svg>
  );
}

const marks = [
  { n: '2', x: 826, y: 515 },
  { n: '3', x: 826, y: 604 },
  { n: '4', x: 826, y: 678 },
  { n: '5', x: 826, y: 777 },
  { n: '6', x: 920, y: 777 },
  { n: '7', x: 1028, y: 777 },
  { n: '8', x: 1122, y: 777 },
  { n: '9', x: 1191, y: 777 },
  { n: '10', x: 1191, y: 698 },
];

// Same model geometry in both viewports, only the view transform differs.
function Plan({ view }: { view: string }) {
  return (
    <svg className="absolute inset-0 h-full w-full" fill="none" aria-label="Чертеж">
      <g transform={view} className="[&_circle]:[vector-effect:non-scaling-stroke] [&_path]:[vector-effect:non-scaling-stroke]">
        <path d="M245.500 1100V391H1255.500V1100" stroke="#222" strokeWidth="1.300" />
        <path d="M362 668L441 783L440 648M386 978v30" stroke="#222" />
        <circle cx="419" cy="751" r="39" stroke="#222" />
        <circle cx="561" cy="744" r="32" stroke="#000" strokeWidth="3" />
        <g fill="#000" textAnchor="middle" className="font-['Roboto_Condensed','Noto_Sans_ExtraCondensed','Noto_Sans_Condensed','Open_Sans_Condensed','Liberation_Sans_Narrow','Roboto',sans-serif]">
          <text x="561" y="760" fontSize="46">
            65
          </text>
          <circle cx="826" cy="431" r="30" stroke="#222" fill="none" />
          <text x="826" y="451" fontSize="56">
            1
          </text>
          <path
            d="M826 496V431H901M955 431H1064M1118 431H1191V496M826 551V658M1191 551V658M826 714V777H901M955 777H1063M1121 777H1191V714"
            stroke="#f00"
            strokeWidth="7"
            strokeLinecap="round"
            strokeLinejoin="round"
            fill="none"
          />
          {marks.map((m) => (
            <g key={m.n}>
              <circle cx={m.x} cy={m.y} r="30" stroke="#222" fill="none" />
              <text x={m.x} y={m.y + 20} fontSize="56">
                {m.n}
              </text>
            </g>
          ))}
        </g>
      </g>
    </svg>
  );
}

function Viewport({ view, label, className }: { view: string; label?: string; className: string }) {
  return (
    <section className={`relative flex min-w-0 basis-0 overflow-hidden bg-white ${className}`}>
      <Plan view={view} />
      {label && <p className="relative pt-[6px] pl-1 leading-4 text-black">{label}</p>}
      <div className="relative ml-auto flex flex-col items-end gap-[2px] pt-2">
        <svg viewBox="0 0 56 16" className="mr-[6px] h-4 w-14" fill="#eee" stroke="#555" strokeWidth="1.300" aria-label="Окно вида">
          <path d="M2 6h11v3H2zM24 2h9v9M22 4h9v9h-9zM25 7h3v3h-3z" />
          <path d="M43 3l8 9M51 3l-8 9" strokeWidth="3" />
          <path d="M44 4l6 7M50 4l-6 7" stroke="#eee" strokeWidth="1" />
        </svg>
        <NavBar />
      </div>
    </section>
  );
}

const toolGroups = [
  ['t1', 't2', 't3', 't4', 't5', 't6', 't7', 'tNum', 'tName', 'tPick', 'tZoom', 't8', 't9'],
  ['tPick2'],
  ['t10', 't11', 't11'],
  ['t12', 't13', 't14', 't15', 't16', 't17', 't18'],
];

function Grip() {
  return <div className="my-[2px] h-[3px] w-[14px] border-y border-dotted border-[#777]" />;
}

function SideToolbar() {
  return (
    <div className="w-[33px] shrink-0 bg-[#f2f2f2] pl-[5px]">
      <div className="flex w-6 flex-col items-center border border-[#b4b4b4] bg-[#f7f7f7]">
        <Grip />
        {toolGroups.map((group, i) => (
          <div key={i} className={`flex w-5 flex-col items-center ${i > 0 ? 'border-t border-[#999] pt-[5px]' : 'pb-[2px]'}`}>
            {group.map((n, j) => (
              <button key={j} aria-label={n} className="flex h-[22px] items-center">
                <Icon name={n} />
              </button>
            ))}
          </div>
        ))}
      </div>
      <div className="mt-px flex w-6 flex-col items-center border border-[#b4b4b4] bg-[#f7f7f7]">
        <Grip />
        {['tPick2', 'tSheet2', 'tNum2'].map((n) => (
          <button key={n} aria-label={n} className="flex h-[22px] items-center">
            <Icon name={n} />
          </button>
        ))}
      </div>
    </div>
  );
}

function CommandLine() {
  return (
    <div className="flex h-[62px] border-t-2 border-[#ececec] bg-[#d9d9d9]">
      <div className="flex w-6 flex-col items-center gap-[7px] pt-[6px] pr-1">
        <div className="h-1 w-4 border-y-2 border-dotted border-[#888]" />
        <svg viewBox="0 0 10 10" className="size-[10px]" stroke="#555" strokeWidth="2" aria-label="Закрыть">
          <path d="M1 1l8 8M9 1L1 9" />
        </svg>
        <svg viewBox="0 0 16 16" className="mt-1 size-4" fill="#eee" stroke={G} aria-label="Настройка">
          <path d="M1 13l7-7c-1-3 1-5 4-5L10 4l2 2 3-2c0 3-2 5-5 4l-7 7c-1 1-3-1-2-2z" />
        </svg>
      </div>
      <div className="flex min-w-0 flex-1 flex-col font-['DejaVu_Sans_Mono',monospace] text-[12px]">
        <div className="h-[39px] bg-[#c8c8c8] pt-[7px] pl-[3px] leading-[15px] text-black">
          <p>Загружается модуль AECC - элементы Диспетчера участков застройки...</p>
          <p>Команда:</p>
        </div>
        <label className="flex h-[21px] items-center gap-[3px] border-y border-[#bbb] bg-white pl-1">
          <svg viewBox="0 0 16 12" className="h-3 w-4" fill="#f4f4f4" stroke={G} aria-hidden="true">
            <path d="M.5.500h15v11H.5z" />
            <path d="M1 1.500h14" strokeWidth="2" />
            <path d="M3 5l2 2-2 2M7 9h4" />
          </svg>
          <Caret big />
          <input aria-label="Команда" placeholder="Введите команду" className="flex-1 pl-1 italic outline-none placeholder:text-[#888]" />
        </label>
      </div>
    </div>
  );
}

function Cell({ children, className = '' }: { children: ReactNode; className?: string }) {
  return <div className={`flex h-6 shrink-0 items-center bg-[#f5f5f5] whitespace-nowrap ${className}`}>{children}</div>;
}

function StatusButton({ icon, on, className = '' }: { icon: string; on?: boolean; className?: string }) {
  return (
    <button
      aria-label={icon}
      className={`flex h-[22px] w-[22px] items-center justify-center border ${on ? 'border-[#4e7fa8] bg-[#cce4f8]' : 'border-transparent'} ${className}`}
    >
      <Icon name={icon} className="size-[15px]" />
    </button>
  );
}

function StatusBar() {
  return (
    <footer className="flex h-[27px] items-center bg-[#d9d9d9] text-[12px] text-[#333]">
      <div className="flex h-full items-start pl-[13px] text-[13px] text-[#777]">
        <button className="h-[18px] w-[66px] rounded-b-lg bg-[#f7f7f7] text-[12px] leading-[17px] font-bold text-[#333]">Модель</button>
        <button className="ml-[6px] h-[18px] w-11 rounded-b-lg bg-[#e6e6e6] leading-[17px]">ГОСТ</button>
        <button className="ml-[5px] h-[18px] w-11 rounded-b-lg bg-[#e6e6e6] leading-[17px]">ЦКП</button>
        <button aria-label="Новый лист" className="ml-2 h-[17px] w-5 rounded-b-lg bg-[#e6e6e6] text-[15px] leading-[15px] font-bold">
          +
        </button>
      </div>
      <div className="ml-auto flex items-center gap-[3px]">
        <Cell className="w-[47px]">
          <StatusButton icon="ucs" on />
          <StatusButton icon="ucs2" className="ml-[2px]" />
        </Cell>
        <Cell className="w-[53px] justify-between pr-1 pl-1">
          <Icon name="exag" />
          1x
          <Caret big />
        </Cell>
        <Cell className="w-[107px] justify-between px-1">
          <Icon name="globe" />
          UTM84-36N
          <Caret big />
        </Cell>
        <Cell className="w-[120px] justify-between pl-1">
          <Icon name="scaleSheet" />
          1 : 689.477
          <Caret big />
          <StatusButton icon="lock" on />
        </Cell>
        <Cell className="w-[150px] justify-end pr-[5px]">272.92, 2790.94, 0.00</Cell>
        <Cell className="w-[56px] justify-center">МОДЕЛЬ</Cell>
        <Cell className="w-6 justify-center">
          <Icon name="grid" />
        </Cell>
        <Cell className="w-[114px] justify-between pl-[3px]">
          <Icon name="ortho" />
          <StatusButton icon="osnap" on />
          <Caret big />
          <StatusButton icon="weight" on />
          <StatusButton icon="cycle" on />
        </Cell>
        <Cell className="w-[80px] justify-between pr-1 pl-1">
          <Icon name="annot" />
          1:2000
          <Caret big />
        </Cell>
        <Cell className="w-[25px] justify-center">
          <Icon name="list" className="size-[15px]" />
        </Cell>
        <Cell className="w-[83px] justify-between px-1">
          <Icon name="stack" />
          1.40
          <Icon name="shapes" />
        </Cell>
        <Cell className="w-[77px] justify-between px-[6px]">
          <Icon name="warn" />
          <Icon name="dbCheck" />
          <Icon name="graph" />
        </Cell>
        <Cell className="w-[49px] justify-between pr-[6px] pl-[3px]">
          <Icon name="expand" />
          <Icon name="burger" />
        </Cell>
      </div>
    </footer>
  );
}

// Marker notes drawn over the whole window.
function Notes() {
  return (
    <svg
      className="pointer-events-none absolute inset-0 z-20 h-full w-full"
      fill="none"
      stroke="#82d5ff"
      strokeWidth="10"
      strokeLinecap="round"
      strokeLinejoin="round"
    >
      <path d="M8 51Q40 48 60 46T100 41T160 43Q164 62 167 80T169 108Q120 113 75 111T10 110M7 52Q12 78 8 102" />
      <path d="M22 160Q26 140 30 124M14 128L28 121L43 134" />
      <path d="M9 508Q40 510 67 507M136 505H195M304 507Q320 511 345 508T376 508M467 508Q495 509 505 506H527M612 504Q625 508 640 507T668 508M746 505Q750 509 789 508M860 506H900M975 503H998M1048 502Q1065 503 1080 507T1126 510M1174 506H1215Q1230 504 1255 505M1305 506Q1340 504 1386 505M1436 502Q1480 503 1510 501M1556 502Q1600 502 1613 505T1630 503M1680 501Q1720 504 1741 500M1792 501H1863M1895 500H1928" />
      <path d="M1429 645Q1440 610 1436 585T1430 526M1408 564L1430 526L1454 560" strokeWidth="11" />
      <g fill="#82d5ff" className="font-['Noto_Sans',sans-serif]" strokeWidth="5">
        <text x="24" y="205" fontSize="74">
          1
        </text>
        <text x="68" y="208" fontSize="92">
          (
        </text>
        <text x="96" y="210" fontSize="60">
          ЛКМ
        </text>
        <text x="196" y="220" fontSize="118">
          )
        </text>
        <text x="1466" y="645" fontSize="124" fontStyle="italic" className="font-['Liberation_Serif',serif]">
          линия
        </text>
        <text x="1460" y="734" fontSize="114" fontStyle="italic" className="font-['Liberation_Serif',serif]">
          деления
        </text>
      </g>
    </svg>
  );
}

export default function App() {
  return (
    <div className="relative flex min-h-screen w-full overflow-hidden bg-black font-['Open_Sans',sans-serif] text-[12px] text-[#333]">
      <div className="mb-[59px] w-2 shrink-0 bg-[linear-gradient(#a18a75,#8d7864_28%,#fff_32%,#9a8672_37%,#857263_45%,#f4ece2_48%,#c9b49c_60%,#dcc4a8)]" />
      <div className="flex min-w-0 flex-1 flex-col">
        <TitleBar />
        <Ribbon />
        <main className="flex flex-1 bg-[#f2f2f2]">
          <div className="flex min-w-0 flex-1 flex-col">
            <div className="flex grow-[360] basis-0">
              <Palette />
              <Viewport className="grow" view="translate(104.620 -120) scale(.63)" />
            </div>
            <Viewport className="grow-[482]" view="translate(-8 -505)" label="[−][Сверху][2D-каркас]" />
          </div>
          <SideToolbar />
        </main>
        <CommandLine />
        <StatusBar />
        <div className="flex h-[3px] bg-black pl-12">
          <div className="w-[344px] border-t border-[#bbb] bg-white" />
        </div>
      </div>
      <Notes />
    </div>
  );
}
